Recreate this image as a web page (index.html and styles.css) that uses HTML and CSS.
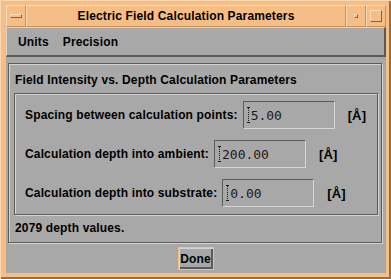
FILE: index.html
```html
<!DOCTYPE html>
<html lang="en">
<head>
    <meta charset="UTF-8">
    <title>Electric Field Calculation Parameters</title>
    <link rel="stylesheet" href="styles.css">
</head>
<body>
    <div class="window">
        <div class="titlebar">
            <div class="tb-btn"><span class="menu-bar"></span></div>
            <div class="title">Electric Field Calculation Parameters</div>
            <div class="tb-btn"><span class="min-dot"></span></div>
            <div class="tb-btn"><span class="max-box"></span></div>
        </div>

        <div class="client">
            <div class="menubar">
                <span>Units</span>
                <span>Precision</span>
            </div>

            <div class="form">
                <div class="panel">
                    <div class="panel-title">Field Intensity vs. Depth Calculation Parameters</div>
                    <div class="inner">
                        <div class="row">
                            <span class="label">Spacing between calculation points:</span>
                            <span class="field"><span class="cursor"></span>5.00</span>
                            <span class="unit">[Å]</span>
                        </div>
                        <div class="row">
                            <span class="label">Calculation depth into ambient:</span>
                            <span class="field"><span class="cursor"></span>200.00</span>
                            <span class="unit">[Å]</span>
                        </div>
                        <div class="row">
                            <span class="label">Calculation depth into substrate:</span>
                            <span class="field"><span class="cursor"></span>0.00</span>
                            <span class="unit">[Å]</span>
                        </div>
                    </div>
                    <div class="status">2079 depth values.</div>
                </div>

                <div class="actions">
                    <button class="done">Done</button>
                </div>
            </div>
        </div>
    </div>
</body>
</html>
```

FILE: styles.css
```css
body {
    margin: 0;
    font-family: "Liberation Sans", Arial, sans-serif;
    font-size: 12px;
    font-weight: bold;
    letter-spacing: 0.15px;
    color: #000;
}

.window {
    width: 391px;
    height: 279px;
    box-sizing: border-box;
    padding: 5px 5px 6px 6px;
    background-color: #f4be86;
    box-shadow: inset 1px 1px 0 #fbd8b2, inset -2px -2px 0 #9c6c3e;
    display: flex;
    flex-direction: column;
}

/* title bar */
.titlebar {
    height: 22px;
    display: flex;
}

.tb-btn, .title {
    box-sizing: border-box;
    border: 1px solid;
    border-color: #fbdcbb #c8925e #c8925e #fbdcbb;
}

.tb-btn {
    width: 20px;
    display: flex;
    justify-content: center;
    align-items: center;
}

.title {
    flex: 1;
    text-align: center;
    line-height: 20px;
}

.menu-bar {
    width: 10px;
    height: 2px;
    border: 1px solid;
    border-color: #fbdcbb #8c6038 #8c6038 #fbdcbb;
}

.min-dot {
    width: 2px;
    height: 2px;
    border: 1px solid;
    border-color: #fbdcbb #8c6038 #8c6038 #fbdcbb;
}

.max-box {
    width: 10px;
    height: 10px;
    border: 1px solid;
    border-color: #fbdcbb #8c6038 #8c6038 #fbdcbb;
}

/* client area */
.client {
    flex: 1;
    background-color: #a8a8a8;
    display: flex;
    flex-direction: column;
}

.menubar {
    height: 30px;
    box-sizing: border-box;
    border: 1px solid #d4d4d4;
    border-right: 2px solid #5a5a5a;
    border-bottom: 2px solid #5a5a5a;
    display: flex;
    align-items: center;
    gap: 14px;
    padding-left: 11px;
}

.form {
    flex: 1;
    padding: 6px 4px 0 2px;
}

.panel {
    border: 1px solid #5c5c5c;
    box-shadow: inset 1px 1px 0 #d4d4d4, 1px 1px 0 #d4d4d4;
    padding: 9px 3px 7px 5px;
}

.panel-title {
    line-height: 14px;
    padding-left: 1px;
}

.inner {
    margin-top: 6px;
    border: 1px solid #5c5c5c;
    box-shadow: inset 1px 1px 0 #d4d4d4, 1px 1px 0 #d4d4d4;
    padding: 7px 9px 7px 10px;
    display: flex;
    flex-direction: column;
    gap: 11px;
}

.row {
    display: flex;
    align-items: center;
    height: 28px;
}

.field {
    margin-left: 5px;
    width: 92px;
    height: 28px;
    box-sizing: border-box;
    border: 1px solid;
    border-color: #5c5c5c #d6d6d6 #d6d6d6 #5c5c5c;
    display: flex;
    align-items: center;
    padding-left: 4px;
    font-family: "DejaVu Sans Mono", "Liberation Mono", monospace;
    font-weight: normal;
    font-size: 13px;
    letter-spacing: 0;
    color: #1a1a1a;
}

.cursor {
    position: relative;
    width: 1px;
    height: 16px;
    margin-right: 1px;
    border-left: 1px dotted #1a1a1a;
}

.cursor::before, .cursor::after {
    content: "";
    position: absolute;
    left: -2px;
    width: 3px;
    height: 1px;
    background-color: #1a1a1a;
}

.cursor::before {
    top: 0;
}

.cursor::after {
    bottom: 0;
}

.unit {
    margin-left: 13px;
    font-size: 13px;
}

.status {
    margin-top: 6px;
    line-height: 14px;
    padding-left: 1px;
}

.actions {
    display: flex;
    justify-content: center;
    padding-top: 4px;
}

.done {
    width: 36px;
    height: 23px;
    box-sizing: border-box;
    padding: 0;
    font-family: inherit;
    font-size: 12px;
    font-weight: bold;
    letter-spacing: 0.15px;
    color: #000;
    background-color: #a8a8a8;
    border: 1px solid #f4be86;
    box-shadow: inset 1px 1px 0 #d4d4d4, inset -2px -2px 0 #5a5a5a;
    margin-left: 1px;
}
```
